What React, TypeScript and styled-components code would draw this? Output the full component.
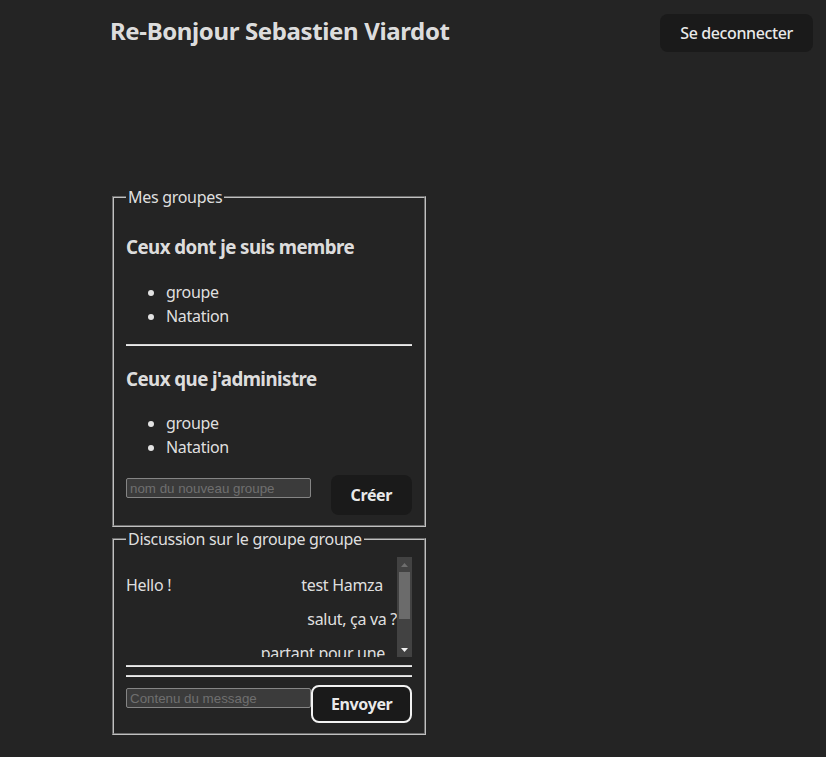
import React from "react";
import styled, { createGlobalStyle } from "styled-components";

const FONT = `"Noto Sans", "Open Sans", sans-serif`;

const GlobalStyle = createGlobalStyle`
  :root { color-scheme: dark; }
  html, body { margin: 0; padding: 0; background: #242424; }
  body {
    font-family: ${FONT};
    font-size: 16px;
    line-height: 1.5;
    letter-spacing: -0.3px;
    color: rgba(255, 255, 255, 0.87);
    -webkit-font-smoothing: antialiased;
  }
`;

const Page = styled.div`
  display: flex;
  flex-direction: column;
  min-height: 757px;
`;

const Header = styled.header`
  display: flex;
  justify-content: space-between;
  align-items: flex-start;
  padding: 14px 13px 0 110px;
`;

const Title = styled.h2`
  margin: -1px 0 0;
  font-size: 24px;
  font-weight: 700;
  line-height: 36px;
  letter-spacing: -0.37px;
`;

const Button = styled.button<{ $tall?: boolean; $focused?: boolean }>`
  font-family: inherit;
  font-size: 16px;
  font-weight: ${(p) => (p.$tall || p.$focused ? 700 : 500)};
  letter-spacing: -0.38px;
  line-height: 20px;
  padding: ${(p) => (p.$tall ? "9px 19px" : p.$focused ? "7px 18px" : "8px 19px")};
  border-radius: 8px;
  border: ${(p) => (p.$focused ? "2px solid #f2f2f2" : "1px solid transparent")};
  background: #1a1a1a;
  color: rgba(255, 255, 255, 0.92);
  cursor: pointer;
`;

const Main = styled.main`
  display: flex;
  flex-direction: column;
  padding: 133px 0 0 112px;
`;

const Group = styled.fieldset`
  margin: 0;
  width: 314px;
  box-sizing: border-box;
  min-width: 0;
  padding: 5.6px 12px 10px;
  border: 2px groove rgb(192, 192, 192);
`;

const Legend = styled.legend`
  padding: 0 2px;
  font-size: 16px;
  line-height: 24px;
`;

const SectionTitle = styled.h3`
  margin: 18.72px 0;
  font-size: 18.72px;
  line-height: 28px;
  font-weight: 700;
  letter-spacing: -0.55px;
`;

const List = styled.ul`
  margin: 16px 0;
  padding-left: 40px;
  line-height: 24px;
`;

const Divider = styled.hr`
  margin: 8px 0;
  height: 0;
  border: none;
  border-top: 1px solid #d4d4d4;
  border-bottom: 1px solid #ececec;
`;

const FormRow = styled.form<{ $spread?: boolean }>`
  display: flex;
  align-items: flex-start;
  justify-content: ${(p) => (p.$spread ? "space-between" : "flex-start")};
  margin: 0;
`;

const TextInput = styled.input`
  width: 185px;
  height: 20px;
  box-sizing: border-box;
  margin-top: 3px;
  padding: 1px 3px;
  font-family: "Liberation Sans", Arial, sans-serif;
  font-size: 13.33px;
  letter-spacing: 0;
  background: #3b3b3b;
  color: #e8e8e8;
  border: 1px solid #858585;
  border-radius: 2px;
  &::placeholder {
    color: #6f6f6f;
  }
`;

const Thread = styled.div`
  display: flex;
  height: 100px;
`;

const Messages = styled.div`
  flex: 1;
  min-width: 0;
  overflow: hidden;
  display: flex;
  flex-direction: column;
  gap: 10px;
  padding-top: 16px;
`;

const Row = styled.div`
  display: flex;
  justify-content: space-between;
  line-height: 24px;
  flex-shrink: 0;
`;

const Message = styled.p<{ $mine?: boolean; $inset?: number }>`
  margin: 0 ${(p) => p.$inset ?? 0}px 0 ${(p) => (p.$mine ? "auto" : "0")};
  text-align: ${(p) => (p.$mine ? "right" : "left")};
  white-space: pre-line;
`;

const ScrollTrack = styled.div`
  width: 15px;
  flex-shrink: 0;
  background: #424242;
  display: flex;
  flex-direction: column;
  align-items: center;
`;

const ScrollArrow = styled.div<{ $active?: boolean }>`
  height: 15px;
  width: 15px;
  display: flex;
  align-items: center;
  justify-content: center;
  color: ${(p) => (p.$active ? "#f0f0f0" : "#6e6e6e")};
`;

const ScrollThumb = styled.div`
  width: 11px;
  height: 47px;
  background: #6b6b6b;
  margin-bottom: auto;
`;

const Arrow = ({ down }: { down?: boolean }) => (
  <svg width="7" height="4" viewBox="0 0 7 4">
    <path d={down ? "M0 0H7L3.5 4Z" : "M0 4H7L3.5 0Z"} fill="currentColor" />
  </svg>
);

export default function App() {
  return (
    <Page>
      <GlobalStyle />
      <Header>
        <Title>Re-Bonjour Sebastien Viardot</Title>
        <Button>Se deconnecter</Button>
      </Header>
      <Main>
        <Group>
          <Legend>Mes groupes</Legend>
          <SectionTitle>Ceux dont je suis membre</SectionTitle>
          <List>
            <li>groupe</li>
            <li>Natation</li>
          </List>
          <Divider />
          <SectionTitle>Ceux que j'administre</SectionTitle>
          <List>
            <li>groupe</li>
            <li>Natation</li>
          </List>
          <FormRow $spread onSubmit={(e) => e.preventDefault()}>
            <TextInput placeholder="nom du nouveau groupe" />
            <Button type="submit" $tall>
              Créer
            </Button>
          </FormRow>
        </Group>
        <Group>
          <Legend>Discussion sur le groupe groupe</Legend>
          <Thread>
            <Messages>
              <Row>
                <Message>Hello !</Message>
                <Message $mine $inset={14}>
                  test Hamza
                </Message>
              </Row>
              <Row>
                <Message $mine>salut, ça va ?</Message>
              </Row>
              <Row>
                <Message $mine $inset={12}>
                  {"partant pour une\nrandonnée ?"}
                </Message>
              </Row>
            </Messages>
            <ScrollTrack>
              <ScrollArrow>
                <Arrow />
              </ScrollArrow>
              <ScrollThumb />
              <ScrollArrow $active>
                <Arrow down />
              </ScrollArrow>
            </ScrollTrack>
          </Thread>
          <Divider />
          <Divider />
          <FormRow onSubmit={(e) => e.preventDefault()}>
            <TextInput placeholder="Contenu du message" />
            <Button type="submit" $focused>
              Envoyer
            </Button>
          </FormRow>
        </Group>
      </Main>
    </Page>
  );
}
